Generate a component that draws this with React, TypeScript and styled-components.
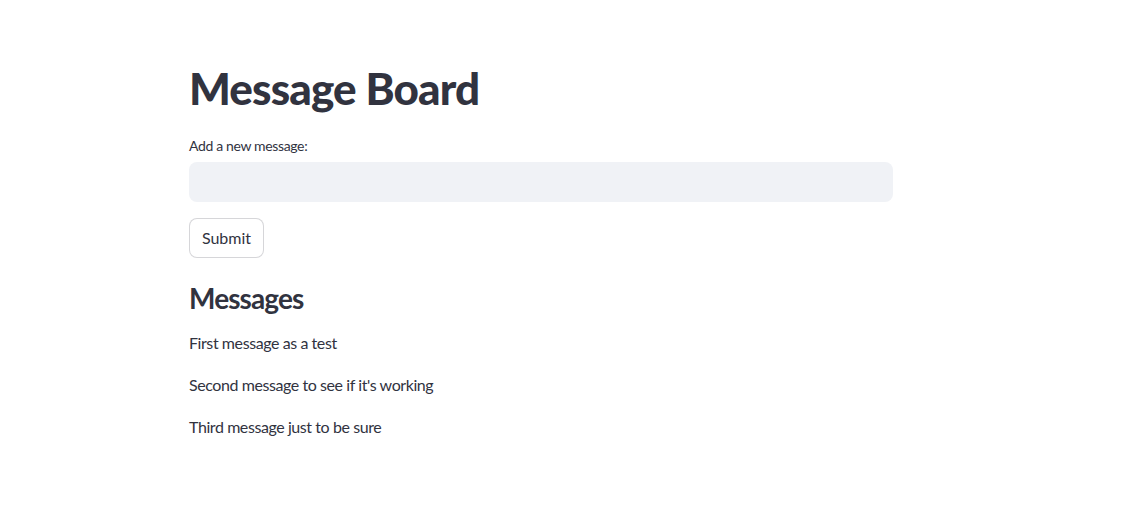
import React from "react";
import styled, { createGlobalStyle } from "styled-components";

const Global = createGlobalStyle`
  html, body { margin: 0; padding: 0; background: #ffffff; }
  body { font-family: Lato, "Noto Sans", sans-serif; color: rgb(49, 51, 63); }
  * { box-sizing: border-box; }
`;

const Main = styled.main`
  width: 704px;
  margin-left: 189px;
  padding-top: 62px;
  display: flex;
  flex-direction: column;
`;

const Title = styled.h1`
  margin: 0;
  font-size: 44px;
  font-weight: 900;
  line-height: 1.2;
  letter-spacing: -0.85px;
`;

const Label = styled.label`
  margin-top: 21px;
  font-size: 14px;
  line-height: 20px;
  height: 20px;
  letter-spacing: -0.35px;
`;

const Input = styled.input`
  margin-top: 6px;
  height: 40px;
  width: 100%;
  border: none;
  border-radius: 8px;
  background: rgb(240, 242, 246);
  font: inherit;
  padding: 0 12px;
  outline: none;
`;

const Button = styled.button`
  align-self: flex-start;
  margin-top: 16px;
  height: 40px;
  width: 75px;
  padding: 0;
  background: #ffffff;
  border: 1px solid rgba(49, 51, 63, 0.2);
  border-radius: 8px;
  font-family: inherit;
  font-size: 16px;
  color: rgb(49, 51, 63);
`;

const Subtitle = styled.h3`
  margin: 24px 0 0;
  font-size: 28px;
  font-weight: 700;
  line-height: 1.2;
  letter-spacing: -0.9px;
`;

const MessageList = styled.div`
  margin-top: 16px;
  display: flex;
  flex-direction: column;
  gap: 18px;
`;

const Message = styled.p`
  margin: 0;
  font-size: 16px;
  line-height: 24px;
  letter-spacing: -0.42px;
`;

const messages = [
  "First message as a test",
  "Second message to see if it's working",
  "Third message just to be sure",
];

export default function App() {
  return (
    <>
      <Global />
      <Main>
        <Title>Message Board</Title>
        <Label htmlFor="msg">Add a new message:</Label>
        <Input id="msg" type="text" />
        <Button>Submit</Button>
        <Subtitle>Messages</Subtitle>
        <MessageList>
          {messages.map((m) => (
            <Message key={m}>{m}</Message>
          ))}
        </MessageList>
      </Main>
    </>
  );
}
